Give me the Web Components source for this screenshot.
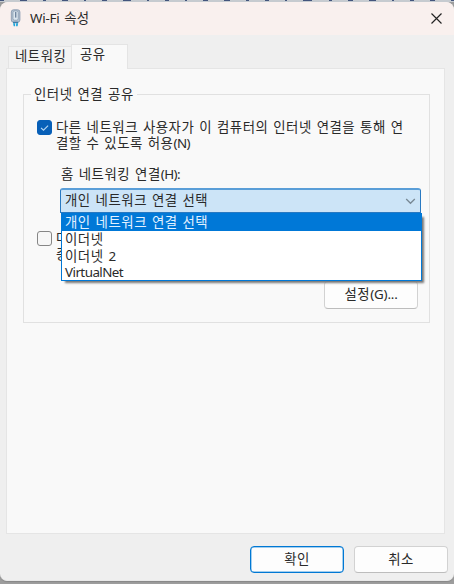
<!DOCTYPE html>
<html lang="ko">
<head>
<meta charset="utf-8">
<title>Wi-Fi 속성</title>
<style>
html,body{margin:0;width:454px;height:584px;overflow:hidden;background:#9d9d9d}
body{font:13.4px/16px "Noto Sans","Noto Sans CJK KR",sans-serif;letter-spacing:.55px;word-spacing:.8px;color:#2a2a2a}
</style>
</head>
<body>
<property-dialog></property-dialog>
<script>
const define=(name,html,setup)=>customElements.define(name,class extends HTMLElement{
  constructor(){
    super();
    const t=document.createElement('template');
    t.innerHTML=html;
    this.attachShadow({mode:'open'}).append(t.content.cloneNode(true));
    if(setup)setup(this);
  }
});

define('latin-text',`<style>:host{letter-spacing:var(--latin,-.55px)}</style><slot></slot>`);

define('adapter-icon',`<style>:host{display:block;width:12px;height:18px}svg{display:block}</style>
<svg width="12" height="18" viewBox="0 0 12 18">
<rect x="1.3" y=".8" width="8.6" height="12.4" rx="2.2" fill="#b4c3d3" stroke="#8a9bb0" stroke-width=".9"/>
<rect x="3" y="2" width="5.2" height="9.2" rx="1.6" fill="#dce6ef" stroke="#8295ab" stroke-width=".7"/>
<rect x="5" y="3" width="1.4" height="5.6" fill="#71869f"/>
<path d="M3 12.8h5.2v1.4H3z" fill="#3e7da8"/>
<path d="M3.1 14.2h2v3h-1.4zM6.1 14.2h2l-.5 3H6.1z" fill="#1aa5dc"/>
</svg>`);

define('title-bar',`<style>
:host{display:flex;align-items:center;box-sizing:border-box;height:33px;padding:0 12px 1px 10px;background:#f9f0ee;border-radius:8px 8px 0 0;flex:none}
adapter-icon{margin-top:-1px}
.t{flex:1;padding:0 0 1px 8px;letter-spacing:.3px;--latin:-.2px}
svg{display:block}
</style><adapter-icon></adapter-icon><div class="t"><slot></slot></div>
<svg width="11" height="11" viewBox="0 0 11 11"><path d="M.5.5l10 10M10.5.5l-10 10" stroke="#222" stroke-width="1.15" fill="none"/></svg>`);

define('tab-item',`<style>
:host{display:block;box-sizing:border-box;width:64px;height:22px;background:#f3f3f3;border:1px solid #e4e4e4;border-bottom:0;padding:1px 0 0 6px;white-space:nowrap}
:host([active]){width:57px;height:25px;background:#f9f9f9;padding:1px 0 0 8px;margin-bottom:-1px;margin-left:-1px;z-index:1}
</style><slot></slot>`);

define('tab-panel',`<style>
:host{display:flex;flex-direction:column;width:439px}
.tabs{display:flex;align-items:flex-end;height:24px;padding-left:2px}
.page{box-sizing:border-box;height:466px;background:#f9f9f9;border:1px solid #e5e5e5;padding:17px 14px 0 16px}
</style><div class="tabs"><slot name="tab"></slot></div><div class="page"><slot></slot></div>`);

define('group-box',`<style>
:host{display:block}
fieldset{box-sizing:border-box;height:237px;margin:0;min-width:0;padding:0 0 0 13px;border:1px solid #e1e1e1}
legend{padding:0 3px;margin-left:-6px;height:16px;line-height:16px}
.c{padding-top:17px}
</style><fieldset><legend><slot name="legend"></slot></legend><div class="c"><slot></slot></div></fieldset>`);

define('check-option',`<style>
:host{display:flex;gap:4px;line-height:16px}
i{box-sizing:border-box;flex:none;width:15px;height:15px;margin-top:1px;border:1px solid #868686;border-radius:3px;background:#f7f7f7}
:host([checked]) i{background:#0860b8;border-color:#0860b8}
svg{display:none}:host([checked]) svg{display:block}
</style><i><svg width="13" height="13" viewBox="0 0 13 13"><path d="M3 6.8l2.5 2.4 4.6-4.6" fill="none" stroke="#b9d8f5" stroke-width="1.1"/></svg></i><div><slot></slot></div>`);

define('list-option',`<style>
:host{display:block;height:16.5px;line-height:16px;padding-left:3px}
:host([selected]){background:#0078d7;color:#e3f1ff;height:18px;line-height:18px}
</style><slot></slot>`);

define('combo-box',`<style>
:host{display:block;position:relative;width:361px;height:25px}
.field{box-sizing:border-box;height:25px;display:flex;align-items:center;justify-content:space-between;padding:0 4px 2px;background:#cce4f7;border:1px solid #2879c2;border-top:2px solid #5a9ed8;border-radius:3px 3px 0 0}
svg{margin-top:2px}
.list{position:absolute;z-index:2;left:1px;top:25px;box-sizing:border-box;width:361px;height:68px;background:#fff;border:1px solid #0078d7;border-top:0;box-shadow:3px 3px 2px -1px #777}
</style><div class="field"><slot name="value"></slot><svg width="11" height="7" viewBox="0 0 11 7"><path d="M1.2 1l4.3 4.3L9.8 1" fill="none" stroke="#788894" stroke-width="1.3"/></svg></div><div class="list"><slot></slot></div>`);

define('push-button',`<style>
:host{display:flex;box-sizing:border-box;width:94px;height:27px;padding-bottom:2px;align-items:center;justify-content:center;background:#fdfdfd;border:1px solid #d2d2d2;border-bottom-color:#bdbdbd;border-radius:4px}
:host([default]){border:1px solid #0078d4;box-shadow:inset 0 0 0 .5px #4ba0df}
</style><slot></slot>`);

define('backdrop-strip',`<style>
:host{display:flex;justify-content:space-between;height:2px;background:#c6cbd0;overflow:hidden}
i{height:1px;background:#43557d}
</style>`,el=>{
  for(const w of [4,7,3,6,2,5,8,2,4,2,5,6,3,4,2,9,3,5,7,2,4,5,3]){
    const i=document.createElement('i');i.style.width=w+'px';el.shadowRoot.append(i);
  }
});

define('property-dialog',`<style>
:host{display:flex;flex-direction:column;width:454px;height:584px}
.win{display:flex;flex-direction:column;height:579px;box-sizing:border-box;background:#efefef;border-bottom:1px solid #e8e8e8;border-radius:8px 8px 7px 7px;box-shadow:0 1px 1px #888}
tab-panel{margin:9px 0 0 6px}
.label{margin:15px 0 6px 24px}
combo-box{margin-left:23px}
.second{margin-top:17px}
.settings{display:flex;justify-content:flex-end;margin:19px 11px 0 0}
.settings push-button{height:28px;padding-bottom:3px;letter-spacing:.6px;--latin:-.2px}
.actions{display:flex;justify-content:flex-end;gap:10px;padding:12px 6px 0 0}
</style>
<backdrop-strip></backdrop-strip>
<div class="win">
<title-bar><latin-text>Wi-Fi</latin-text> 속성</title-bar>
<tab-panel>
<tab-item slot="tab">네트워킹</tab-item><tab-item slot="tab" active>공유</tab-item>
<group-box><span slot="legend">인터넷 연결 공유</span>
<check-option checked>다른 네트워크 사용자가 이 컴퓨터의 인터넷 연결을 통해 연<br>결할 수 있도록 허용<latin-text>(N)</latin-text></check-option>
<div class="label">홈 네트워킹 연결<latin-text>(H):</latin-text></div>
<combo-box><span slot="value">개인 네트워크 연결 선택</span>
<list-option selected>개인 네트워크 연결 선택</list-option><list-option>이더넷</list-option><list-option>이더넷 2</list-option><list-option><latin-text>VirtualNet</latin-text></list-option></combo-box>
<check-option class="second">다<br>중</check-option>
<div class="settings"><push-button>설정<latin-text>(G)...</latin-text></push-button></div>
</group-box>
</tab-panel>
<div class="actions"><push-button default>확인</push-button><push-button>취소</push-button></div>
</div>`);
</script>
</body>
</html>
